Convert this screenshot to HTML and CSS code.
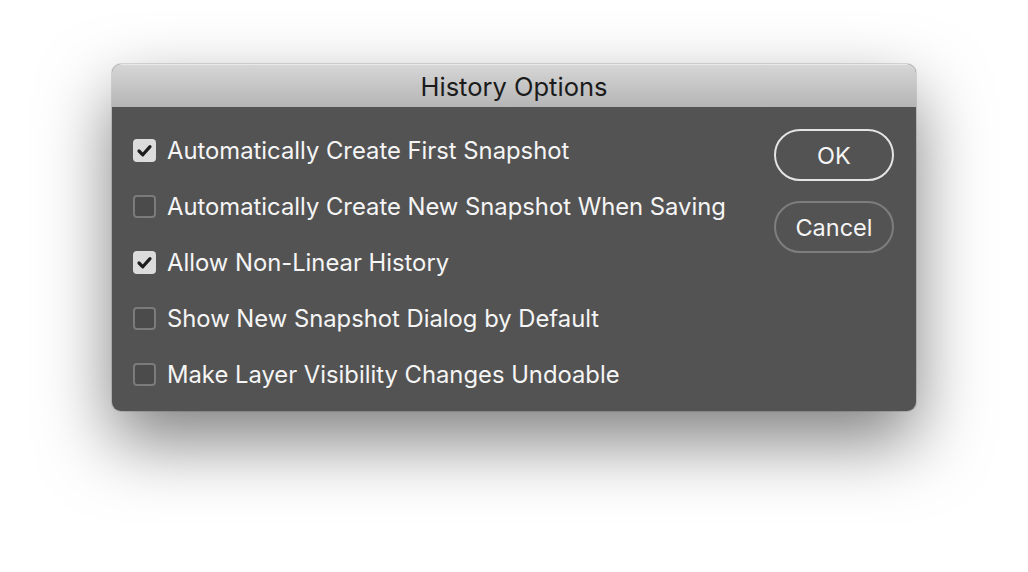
FILE: index.html
```html
<!DOCTYPE html>
<html>
<head>
<meta charset="utf-8">
<link rel="stylesheet" href="styles.css">
</head>
<body>
<div class="stage">
  <div class="dialog">
    <div class="titlebar">History Options</div>
    <div class="content">
      <div class="options">
        <label class="row"><span class="box checked"><svg viewBox="0 0 23 23"><path d="M6 12 L9.8 15.8 L17 7.6" fill="none" stroke="#1e1e1e" stroke-width="3.2" stroke-linecap="round" stroke-linejoin="round"/></svg></span><span class="label">Automatically Create First Snapshot</span></label>
        <label class="row"><span class="box"></span><span class="label">Automatically Create New Snapshot When Saving</span></label>
        <label class="row"><span class="box checked"><svg viewBox="0 0 23 23"><path d="M6 12 L9.8 15.8 L17 7.6" fill="none" stroke="#1e1e1e" stroke-width="3.2" stroke-linecap="round" stroke-linejoin="round"/></svg></span><span class="label">Allow Non-Linear History</span></label>
        <label class="row"><span class="box"></span><span class="label">Show New Snapshot Dialog by Default</span></label>
        <label class="row"><span class="box"></span><span class="label">Make Layer Visibility Changes Undoable</span></label>
      </div>
      <div class="buttons">
        <div class="btn primary">OK</div>
        <div class="btn">Cancel</div>
      </div>
    </div>
  </div>
</div>
</body>
</html>
```
FILE: styles.css
```css
html, body {
  margin: 0;
  padding: 0;
  background: #ffffff;
}
body {
  width: 1028px;
  height: 572px;
  overflow: hidden;
  font-family: "Inter", "Roboto", "Liberation Sans", sans-serif;
}
.stage {
  padding: 64px 0 0 112px;
}
.dialog {
  width: 804px;
  height: 347px;
  border-radius: 9px;
  overflow: hidden;
  background: #535353;
  box-shadow: 0 30px 70px rgba(0,0,0,0.5), 0 0 0 1px rgba(0,0,0,0.12);
  display: flex;
  flex-direction: column;
}
.titlebar {
  height: 43px;
  flex: none;
  background: linear-gradient(#d6d6d6, #b5b5b5);
  border-top: 1px solid #e8e8e8;
  box-sizing: border-box;
  text-align: center;
  line-height: 44px;
  font-size: 25.5px;
  color: #1b1b1b;
}
.content {
  flex: 1;
  display: flex;
  justify-content: space-between;
  padding: 22px 22px 0 21px;
}
.options {
  display: flex;
  flex-direction: column;
  padding-top: 10px;
}
.row {
  display: flex;
  align-items: center;
  gap: 11px;
  height: 23px;
  margin-bottom: 33px;
  color: #f5f5f5;
  font-size: 23.8px;
}
.box {
  width: 23px;
  height: 23px;
  box-sizing: border-box;
  border-radius: 4px;
  border: 2px solid #7b7b7b;
  background: #4b4b4b;
  display: flex;
  align-items: center;
  justify-content: center;
}
.box.checked {
  border: none;
  background: #dcdcdc;
}
.box svg {
  width: 23px;
  height: 23px;
}
.buttons {
  display: flex;
  flex-direction: column;
  gap: 20px;
}
.btn {
  width: 120px;
  height: 52px;
  box-sizing: border-box;
  border-radius: 26px;
  border: 2px solid #7e7e7e;
  color: #f5f5f5;
  font-size: 23.5px;
  display: flex;
  align-items: center;
  justify-content: center;
}
.btn.primary {
  border-color: #e4e4e4;
}
```
